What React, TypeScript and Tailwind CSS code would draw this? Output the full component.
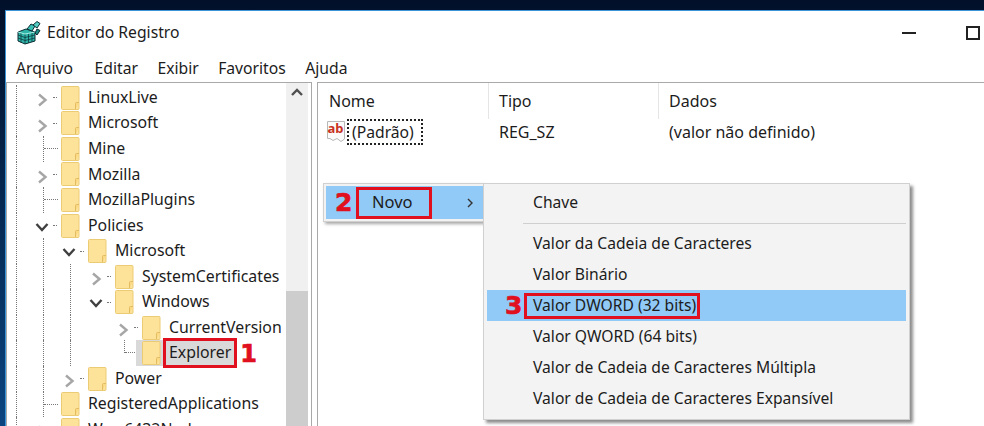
type Row = {
  label: string
  guides: boolean[]
  exp?: "right" | "down"
  last?: boolean
  selected?: boolean
}

const rows: Row[] = [
  { label: "LinuxLive", guides: [true], exp: "right" },
  { label: "Microsoft", guides: [true], exp: "right" },
  { label: "Mine", guides: [true] },
  { label: "Mozilla", guides: [true], exp: "right" },
  { label: "MozillaPlugins", guides: [true] },
  { label: "Policies", guides: [true], exp: "down" },
  { label: "Microsoft", guides: [true, true], exp: "down" },
  { label: "SystemCertificates", guides: [true, true, true], exp: "right" },
  { label: "Windows", guides: [true, true, true], exp: "down" },
  { label: "CurrentVersion", guides: [true, true, true, false], exp: "right" },
  { label: "Explorer", guides: [true, true, true, false], last: true, selected: true },
  { label: "Power", guides: [true, true], exp: "right" },
  { label: "RegisteredApplications", guides: [true] },
  { label: "Wow6432Node", guides: [true], exp: "right" },
]

const submenu = [
  "Valor da Cadeia de Caracteres",
  "Valor Binário",
  "Valor DWORD (32 bits)",
  "Valor QWORD (64 bits)",
  "Valor de Cadeia de Caracteres Múltipla",
  "Valor de Cadeia de Caracteres Expansível",
]

function Folder() {
  return (
    <svg width="19" height="24" viewBox="0 0 19 24" className="shrink-0">
      <path d="M.5 1.5Q.5.5 1.5.5H17Q18 .5 18 1.5V22.5Q18 23.5 17 23.5H1.5Q.5 23.5 .5 22.5Z" fill="#fde39a" stroke="#eccb75" />
      <path d="M14.5 23V17.5Q14.5 16.5 15.5 16.5H18" fill="#fbd982" stroke="#e3bc62" />
    </svg>
  )
}

function RegeditIcon() {
  return (
    <svg width="24" height="24" viewBox="0 0 24 24" className="shrink-0">
      <path d="M1 11L9 8L18 11V20L8 23L1 20Z" fill="#2fb5a8" stroke="#0d2b33" />
      <path d="M1 14L8 16.5L18 14M1 17L8 19.5L18 17M4 12V21.5M8 13V23M11.5 12.5V22M15 12V21" fill="none" stroke="#0d3a40" strokeWidth=".8" />
      <path d="M1 11L8 13L18 11" fill="none" stroke="#a7eee4" />
      <path d="M10 8L14 3L18 5L15 10Z" fill="#36bfb2" stroke="#0d2b33" />
      <path d="M16 4L20 0.5L23 2.5L20 7Z" fill="#55cfc3" stroke="#0d2b33" />
      <path d="M18 12L20 8L23 9.5L20 14Z" fill="#1e8f86" stroke="#0d2b33" />
    </svg>
  )
}

function StringIcon() {
  return (
    <svg width="20" height="24" viewBox="0 0 20 24" className="shrink-0">
      <path d="M1.5 1.5H18.5V19L15 21.5L11 18.5L7 20.5L4 18.5L1.5 18.5Z" fill="#fbfbfb" stroke="#b8b8b8" />
      <text x="1.5" y="13" fontSize="13" fontWeight="700" fill="#c8321f" fontFamily="Noto Sans, sans-serif">ab</text>
    </svg>
  )
}

function Expander({ dir }: { dir: "right" | "down" }) {
  return (
    <>
      {dir === "right" ? (
        <svg width="14" height="14" viewBox="0 0 14 14" className="mt-[5px] ml-[1px] shrink-0">
          <path d="M4 1.5L10.5 7L4 12.5" fill="none" stroke="#a6a6a6" strokeWidth="2.4" />
        </svg>
      ) : (
        <svg width="14" height="10" viewBox="0 0 14 10" className="mt-[2px] ml-[1px] shrink-0">
          <path d="M1.5 2L7 8L12.5 2" fill="none" stroke="#404040" strokeWidth="2.4" />
        </svg>
      )}
      <div className="ml-[4px] w-[4px] border-t border-dotted border-[#777]" />
    </>
  )
}

function TreeRow({ row }: { row: Row }) {
  return (
    <div className="flex h-[25.55px] shrink-0 items-center">
      {row.guides.map((on, i) => (
        <div key={i} className="h-full w-[27px] shrink-0">
          {on && <div className="ml-[9px] h-full border-l border-dotted border-[#777]" />}
        </div>
      ))}
      <div className="flex h-full w-[27px] shrink-0 items-center">
        {row.exp ? (
          <Expander dir={row.exp} />
        ) : (
          <div className={`ml-[9px] flex flex-1 flex-col self-start border-l border-dotted border-[#777] ${row.last ? "h-1/2 justify-end" : "h-full justify-center"}`}>
            <div className="mr-[3px] border-t border-dotted border-[#777]" />
          </div>
        )}
      </div>
      {row.selected ? (
        <div className="-ml-[6px] flex h-full items-center bg-[#d9d9d9] pl-[6px]">
          <Folder />
          <div className="ml-[2px] flex h-[30px] items-center border-[3px] border-[#e0101f] bg-[#d9d9d9] px-[3px] leading-none">
            {row.label}
          </div>
        </div>
      ) : (
        <>
          <Folder />
          <span className="ml-[8px] whitespace-nowrap">{row.label}</span>
        </>
      )}
      {row.selected && (
        <span className="ml-[3px] pt-[2px] font-['DejaVu_Sans'] text-[24px] font-bold text-[#e0101f] [-webkit-text-stroke:0.7px_#e0101f]">1</span>
      )}
    </div>
  )
}

export default function App() {
  return (
    <div className="relative flex h-[426px] w-[984px] flex-col overflow-hidden bg-gradient-to-b from-[#02102a] to-[#0b4580] pt-[10px] pl-[5px] font-['Noto_Sans',sans-serif] text-[16px] text-[#1c1c1c]">
      <div className="flex min-h-0 flex-1 flex-col border-t border-l border-[#3a94d8] bg-white">
        <div className="flex h-[38px] shrink-0 items-center pt-[6px] pl-[11px]">
          <RegeditIcon />
          <span className="ml-[6px] text-[15.7px]">Editor do Registro</span>
          <div className="mr-[50px] ml-auto h-[2px] w-[14px] bg-[#222]" />
          <div className="mr-[4px] h-[14px] w-[14px] border-2 border-[#222]" />
        </div>
        <div className="flex h-[33px] shrink-0 items-center gap-[19.5px] pt-[6px] pl-[10px] text-[15.7px]">
          <span className="mr-[2px]">Arquivo</span>
          <span>Editar</span>
          <span>Exibir</span>
          <span>Favoritos</span>
          <span>Ajuda</span>
        </div>
        <div className="flex min-h-0 flex-1 gap-[5px]">
          <div className="flex w-[306px] shrink-0 border border-b-0 border-[#a9a9a9]">
            <div className="flex min-w-0 flex-1 flex-col overflow-hidden pt-[2px] text-[15.85px]">
              {rows.map((row, i) => (
                <TreeRow key={i} row={row} />
              ))}
            </div>
            <div className="mr-[3px] flex w-[22px] shrink-0 flex-col bg-[#f0f0f0]">
              <div className="flex h-[208px] shrink-0 items-start justify-center pt-[5px]">
                <svg width="14" height="9" viewBox="0 0 14 9">
                  <path d="M2 7L7 2L12 7" fill="none" stroke="#505050" strokeWidth="2.4" />
                </svg>
              </div>
              <div className="flex-1 bg-[#cdcdcd]" />
            </div>
          </div>
          <div className="flex min-w-0 flex-1 flex-col border-t border-l border-[#a9a9a9]">
            <div className="flex h-[36px] shrink-0 items-center">
              <div className="h-full w-[170px] pt-[6px] pl-[11px]">Nome</div>
              <div className="h-full w-[170px] border-l border-[#e5e5e5] pt-[6px] pl-[10px]">Tipo</div>
              <div className="h-full flex-1 border-l border-[#e5e5e5] pt-[6px] pl-[10px]">Dados</div>
            </div>
            <div className="flex h-[25px] shrink-0 items-center">
              <div className="flex w-[170px] items-center pl-[8px]">
                <StringIcon />
                <span className="ml-[1px] border-2 border-dotted border-[#222] pr-[7px] pl-[3px] text-[15.7px] leading-[22px]">(Padrão)</span>
              </div>
              <div className="w-[170px] pl-[11px]">REG_SZ</div>
              <div className="pl-[11px]">(valor não definido)</div>
            </div>
          </div>
        </div>
      </div>

      <div className="absolute top-[183px] left-[323px] flex h-[39px] w-[161px] items-stretch border border-[#d0d0d0] bg-[#f2f2f2] p-[2px] pr-0 shadow-[2px_2px_3px_rgba(0,0,0,0.35)]">
        <div className="flex flex-1 items-center bg-[#91c9f7] pl-[9px]">
          <span className="w-[21px] font-['DejaVu_Sans'] text-[25px] leading-none font-bold text-[#e0101f] [-webkit-text-stroke:0.7px_#e0101f]">2</span>
          <div className="flex h-[32px] w-[76px] items-center border-[3px] border-[#e0101f] pl-[13px] text-[16.5px]">Novo</div>
          <svg width="14" height="14" viewBox="0 0 14 14" className="mr-[6px] ml-auto">
            <path d="M5 3L9 7L5 11" fill="none" stroke="#333" strokeWidth="1.4" />
          </svg>
        </div>
      </div>

      <div className="absolute top-[183px] left-[483px] flex w-[427px] flex-col border border-[#d0d0d0] bg-[#f3f3f3] p-[3px] pb-[5px] text-[15.65px] shadow-[3px_3px_3px_rgba(0,0,0,0.45)]">
        <div className="flex h-[31px] items-center pl-[46px]">Chave</div>
        <div className="mt-[5px] mb-[4px] ml-[36px] border-t border-[#cfcfcf]" />
        {submenu.map((item) =>
          item.includes("DWORD") ? (
            <div key={item} className="flex h-[31px] items-center bg-[#91c9f7] pl-[18px]">
              <span className="w-[19px] font-['DejaVu_Sans'] text-[25px] leading-none font-bold text-[#e0101f] [-webkit-text-stroke:0.7px_#e0101f]">3</span>
              <div className="flex h-[26px] items-center border-[3px] border-[#e0101f] pr-[1px] pl-[6px]">{item}</div>
            </div>
          ) : (
            <div key={item} className="flex h-[31px] items-center pl-[46px]">{item}</div>
          )
        )}
      </div>
    </div>
  )
}
